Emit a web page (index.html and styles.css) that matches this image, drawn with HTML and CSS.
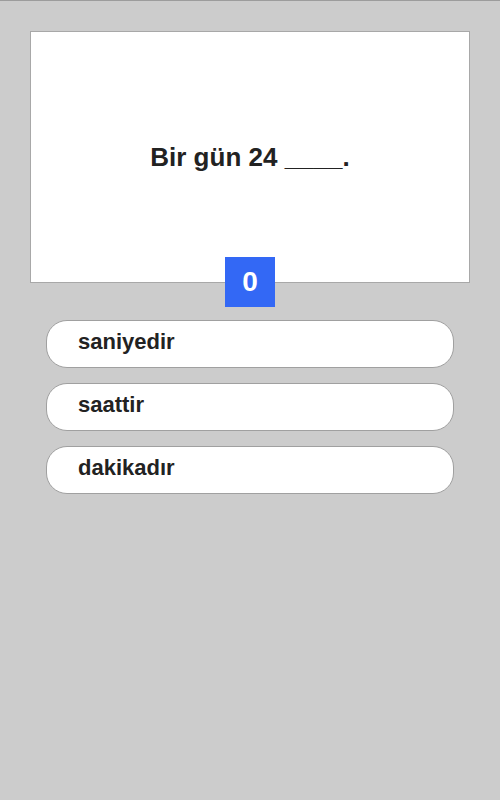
FILE: index.html
```html
<!DOCTYPE html>
<html lang="tr">
<head>
  <meta charset="UTF-8" />
  <meta name="viewport" content="width=device-width, initial-scale=1.0"/>
  <title>Soru</title>
  <link rel="stylesheet" href="styles.css">
</head>
<body>
  <div class="question-card">
    <p class="question-text">Bir gün 24 ____.</p>
    <div class="score-badge">0</div>
  </div>

  <div class="answers">
    <button class="answer-btn">saniyedir</button>
    <button class="answer-btn">saattir</button>
    <button class="answer-btn">dakikadır</button>
  </div>
</body>
</html>
```

FILE: styles.css
```css
html, body {
  margin: 0;
  height: 100%;
}

body {
  background: #cccccc;
  border-top: 1px solid #9c9c9c;
  box-sizing: border-box;
  font-family: "Liberation Sans", Arial, sans-serif;
  color: #222;
}

.question-card {
  position: relative;
  margin: 30px 30px 0 30px;
  height: 250px;
  background: #fff;
  border: 1px solid #a8a8a8;
  display: flex;
  align-items: center;
  justify-content: center;
}

.question-text {
  margin: 0;
  font-size: 26px;
  font-weight: bold;
  color: #222;
}

/* score box hangs over the bottom edge of the card */
.score-badge {
  position: absolute;
  left: 50%;
  bottom: -25px;
  transform: translateX(-50%);
  width: 50px;
  height: 50px;
  background: #3368f5;
  color: #fff;
  font-size: 28px;
  font-weight: bold;
  display: flex;
  align-items: center;
  justify-content: center;
}

.answers {
  margin: 37px 46px 0 46px;
  display: flex;
  flex-direction: column;
  gap: 15px;
}

.answer-btn {
  height: 48px;
  background: #fff;
  border: 1px solid #a0a0a0;
  border-radius: 21px;
  padding: 0 0 4px 31px;
  text-align: left;
  font-family: "Liberation Sans", Arial, sans-serif;
  font-size: 22px;
  font-weight: bold;
  color: #222;
}
```
